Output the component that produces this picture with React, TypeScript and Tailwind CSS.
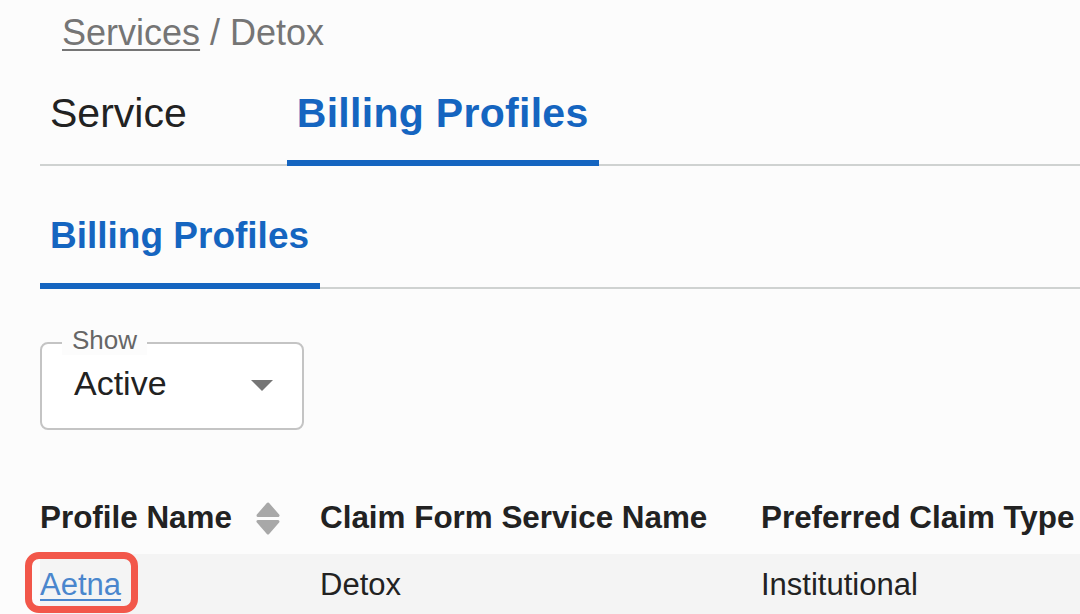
import React from "react";

const SortIcon = () => (
  <svg width="24" height="33" viewBox="0 0 24 33" className="shrink-0">
    <path
      d="M12 2 L22 13.5 L2 13.5 Z"
      fill="#a8a8a8"
      stroke="#a8a8a8"
      strokeWidth="3"
      strokeLinejoin="round"
    />
    <path
      d="M2 19.5 L22 19.5 L12 31 Z"
      fill="#a8a8a8"
      stroke="#a8a8a8"
      strokeWidth="3"
      strokeLinejoin="round"
    />
  </svg>
);

const App: React.FC = () => {
  return (
    <div
      className="w-[1080px] h-[614px] overflow-hidden bg-[#fcfcfc] text-[#212121]"
      style={{ fontFamily: '"Liberation Sans", Arial, sans-serif' }}
    >
      {/* Breadcrumb */}
      <div className="pl-[62px] pt-[13px] text-[36px] leading-[40px] text-[#757575]">
        <span className="underline decoration-2 underline-offset-[4px]">Services</span>
        <span> / Detox</span>
      </div>

      <div className="ml-[40px]">
        {/* Top tabs */}
        <div className="mt-[36px] flex border-b-2 border-[#cfd2d1]">
          <div className="px-[10px] pb-[27px] text-[41px] leading-[48px] text-[#222]">
            Service
          </div>
          <div className="ml-[90px] -mb-[2px] px-[10px] pb-[21px] border-b-[6px] border-[#1565c0] text-[41px] leading-[48px] font-bold text-[#1565c0] tracking-[0.3px]">
            Billing Profiles
          </div>
        </div>

        {/* Sub tabs */}
        <div className="mt-[48px] flex border-b-2 border-[#cfd2d1]">
          <div className="-mb-[2px] w-[280px] px-[10px] pb-[25px] border-b-[6px] border-[#1565c0] text-[37px] leading-[44px] font-bold text-[#1565c0]">
            Billing Profiles
          </div>
        </div>

        {/* Show select */}
        <div className="relative mt-[53px] w-[264px] h-[88px] rounded-[8px] border-2 border-[#c4c4c4] bg-white">
          <span className="absolute -top-[19px] left-[20px] bg-[#fcfcfc] px-[10px] text-[26px] leading-[30px] text-[#666]">
            Show
          </span>
          <div className="flex items-start justify-between pl-[32px] pr-[29px] pt-[19px]">
            <span className="text-[34px] leading-[40px] text-[#222]">Active</span>
            <svg width="22" height="11" viewBox="0 0 22 11" className="mt-[17px]">
              <path d="M0 0 L22 0 L11 11 Z" fill="#757575" />
            </svg>
          </div>
        </div>

        {/* Table */}
        <div className="mt-[70px]">
          <div className="grid grid-cols-[280px_441px_1fr] pb-[18px] text-[31.4px] leading-[36px] font-bold text-[#222]">
            <div className="flex items-center gap-[24px]">
              <span className="whitespace-nowrap">Profile Name</span>
              <SortIcon />
            </div>
            <div className="whitespace-nowrap">Claim Form Service Name</div>
            <div className="whitespace-nowrap">Preferred Claim Type</div>
          </div>
          <div className="relative grid grid-cols-[280px_441px_1fr] bg-[#f4f4f4] pt-[13px] pb-[13px] text-[31px] leading-[36px] text-[#222]">
            <div>
              <a
                href="#"
                className="text-[#4a86cd] underline decoration-2 underline-offset-[4px]"
              >
                Aetna
              </a>
            </div>
            <div>Detox</div>
            <div>Institutional</div>
            {/* highlight annotation */}
            <div className="absolute -left-[15px] -top-[2px] w-[113px] h-[61px] rounded-[14px] border-[7px] border-[#f2574a]" />
          </div>
        </div>
      </div>
    </div>
  );
};

export default App;
